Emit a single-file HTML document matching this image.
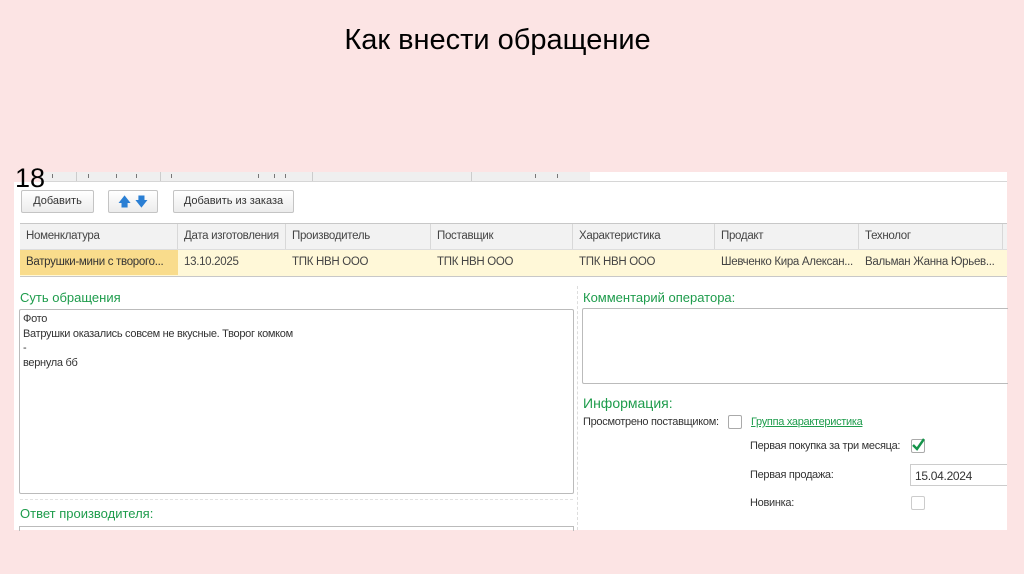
<!DOCTYPE html>
<html><head><meta charset="utf-8"><style>
body{margin:0;width:1024px;height:574px;background:#fce4e4;position:relative;overflow:hidden;font-family:"Liberation Sans",sans-serif;}
.a{position:absolute;white-space:nowrap}
.s{font-size:11px;color:#333;letter-spacing:-0.3px}
.g{color:#1e9c4c;font-size:13px}
.btn{position:absolute;background:linear-gradient(#fff,#ececec);border:1px solid #c4c4c4;border-radius:2px;font-size:11px;color:#333;text-align:center;box-sizing:border-box}
.cell{position:absolute;font-size:11.5px;color:#444;padding-left:6px;box-sizing:border-box;border-right:1px solid #d8d8d8;height:25px;line-height:25px;white-space:nowrap;overflow:hidden;letter-spacing:-0.3px}
.t{position:absolute;top:174px;width:1px;height:4px;background:#777}
</style></head><body>
<div class="a" style="left:0;width:995px;text-align:center;top:24px;font-size:29px;color:#000">Как внести обращение</div>
<div class="a" style="left:40px;top:172px;width:967px;height:358px;background:#fff"></div>
<div class="a" style="left:14px;top:182px;width:26px;height:348px;background:#fff"></div>
<div class="a" style="left:40px;top:172px;width:550px;height:9px;background:#efefef;border-bottom:1px solid #d0d0d0"></div>
<div class="a" style="left:76px;top:172px;width:1px;height:9px;background:#ccc"></div>
<div class="a" style="left:160px;top:172px;width:1px;height:9px;background:#ccc"></div>
<div class="a" style="left:312px;top:172px;width:1px;height:9px;background:#ccc"></div>
<div class="a" style="left:471px;top:172px;width:1px;height:9px;background:#ccc"></div>
<div class="t" style="left:52px"></div><div class="t" style="left:88px"></div><div class="t" style="left:116px"></div><div class="t" style="left:136px"></div><div class="t" style="left:171px"></div><div class="t" style="left:258px"></div><div class="t" style="left:274px"></div><div class="t" style="left:285px"></div><div class="t" style="left:535px"></div><div class="t" style="left:557px"></div>
<div class="a" style="left:40px;top:181px;width:967px;height:1px;background:#d6d6d6"></div>
<div class="a" style="left:15px;top:163px;font-size:27px;color:#000">18</div>
<div class="btn" style="left:21px;top:190px;width:73px;height:23px;line-height:21px">Добавить</div>
<div class="btn" style="left:108px;top:190px;width:50px;height:23px;line-height:21px;color:#2a7fd4;font-size:13px">🡅 🡇</div>
<div class="btn" style="left:173px;top:190px;width:121px;height:23px;line-height:21px">Добавить из заказа</div>
<div class="a" style="left:20px;top:223px;width:987px;height:52px;border-top:1px solid #c8c8c8;border-bottom:1px solid #c8c8c8;background:#fff8d8"></div>
<div class="a" style="left:20px;top:224px;width:987px;height:25px;background:#f2f2f2;border-bottom:1px solid #ddd"></div>
<div class="cell" style="left:20px;top:224px;width:158px">Номенклатура</div>
<div class="cell" style="left:178px;top:224px;width:108px">Дата изготовления</div>
<div class="cell" style="left:286px;top:224px;width:145px">Производитель</div>
<div class="cell" style="left:431px;top:224px;width:142px">Поставщик</div>
<div class="cell" style="left:573px;top:224px;width:142px">Характеристика</div>
<div class="cell" style="left:715px;top:224px;width:144px">Продакт</div>
<div class="cell" style="left:859px;top:224px;width:144px">Технолог</div>
<div class="cell" style="left:20px;top:250px;width:158px;background:#f9dc8c;color:#333;border:0">Ватрушки-мини с творого...</div>
<div class="cell" style="left:178px;top:250px;width:108px;border:0">13.10.2025</div>
<div class="cell" style="left:286px;top:250px;width:145px;border:0">ТПК НВН ООО</div>
<div class="cell" style="left:431px;top:250px;width:142px;border:0">ТПК НВН ООО</div>
<div class="cell" style="left:573px;top:250px;width:142px;border:0">ТПК НВН ООО</div>
<div class="cell" style="left:715px;top:250px;width:144px;border:0">Шевченко Кира Алексан...</div>
<div class="cell" style="left:859px;top:250px;width:144px;border:0">Вальман Жанна Юрьев...</div>
<div class="a g" style="left:20px;top:290px">Суть обращения</div>
<div class="a" style="left:19px;top:309px;width:553px;height:183px;border:1px solid #bbb;border-radius:2px"></div>
<div class="a s" style="left:23px;top:312px;line-height:14.5px">Фото<br>Ватрушки оказались совсем не вкусные. Творог комком<br>-<br>вернула бб</div>
<div class="a" style="left:20px;top:499px;width:553px;border-top:1px dashed #e2e2e2"></div>
<div class="a g" style="left:20px;top:506px">Ответ производителя:</div>
<div class="a" style="left:19px;top:526px;width:553px;height:4px;border:1px solid #bbb;border-bottom:0"></div>
<div class="a" style="left:577px;top:286px;height:244px;border-left:1px dashed #ddd"></div>
<div class="a g" style="left:583px;top:290px">Комментарий оператора:</div>
<div class="a" style="left:582px;top:308px;width:425px;height:74px;border:1px solid #bbb;border-right:0;border-radius:2px 0 0 2px"></div>
<div class="a g" style="left:583px;top:395px;font-size:14px">Информация:</div>
<div class="a s" style="left:583px;top:416px">Просмотрено поставщиком:</div>
<div class="a" style="left:728px;top:415px;width:12px;height:12px;border:1px solid #aaa;border-radius:2px"></div>
<div class="a" style="left:751px;top:416px;font-size:11px;color:#1e9c4c;text-decoration:underline;letter-spacing:-0.3px">Группа характеристика</div>
<div class="a s" style="left:750px;top:440px">Первая покупка за три месяца:</div>
<div class="a" style="left:911px;top:439px;width:12px;height:12px;border:1px solid #aaa;border-radius:2px"></div>
<svg class="a" style="left:910px;top:436px" width="16" height="16"><path d="M3 9 L7 13 L14 3" stroke="#15944a" stroke-width="2.4" fill="none"/></svg>
<div class="a s" style="left:750px;top:469px">Первая продажа:</div>
<div class="a" style="left:910px;top:464px;width:97px;height:22px;border:1px solid #ccc;border-right:0;box-sizing:border-box"></div>
<div class="a s" style="left:915px;top:469px;font-size:12px">15.04.2024</div>
<div class="a s" style="left:750px;top:497px">Новинка:</div>
<div class="a" style="left:911px;top:496px;width:12px;height:12px;border:1px solid #ccc;border-radius:2px"></div>
</body></html>
